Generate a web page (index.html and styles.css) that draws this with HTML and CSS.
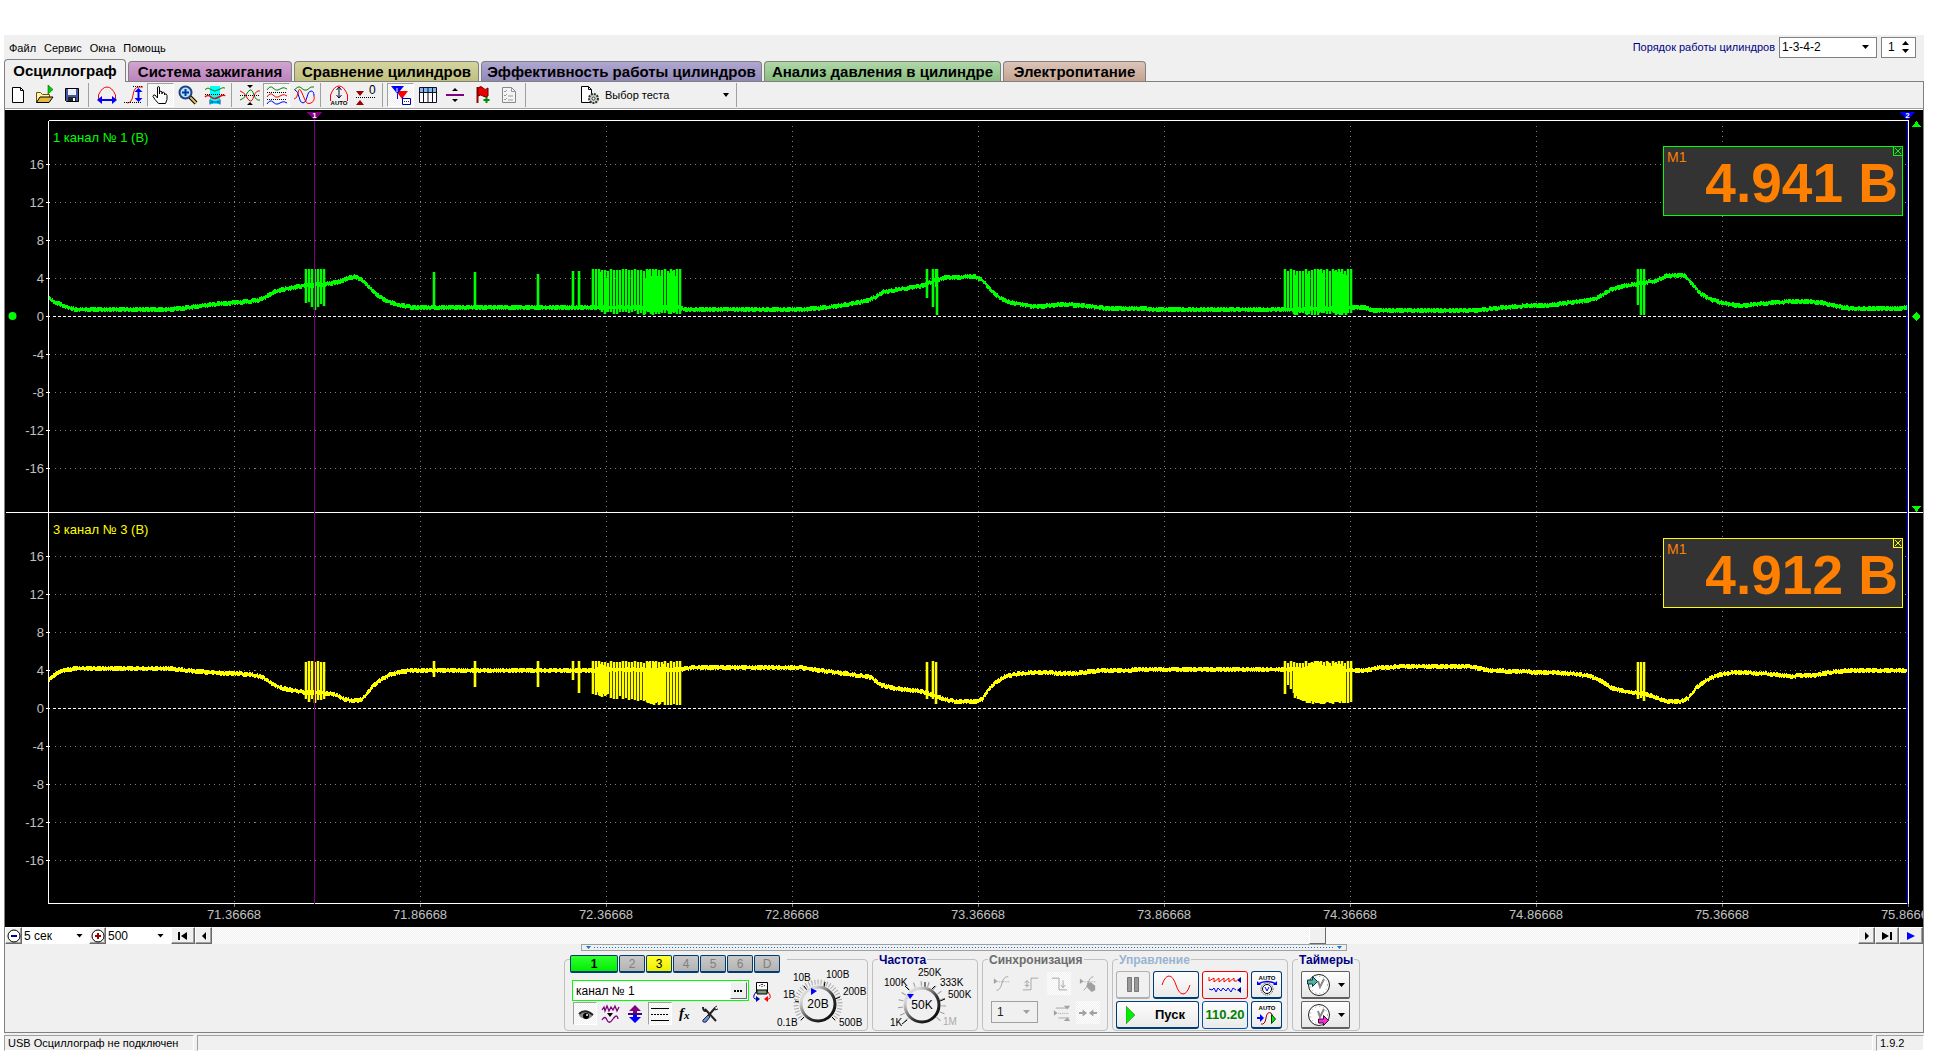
FILE: index.html
```html
<!DOCTYPE html>
<html lang="ru">
<head>
<meta charset="utf-8">
<title>USB Осциллограф</title>
<link rel="stylesheet" href="styles.css">
</head>
<body>
<header class="menubar">
  <nav class="menu">
    <button>Файл</button><button>Сервис</button><button>Окна</button><button>Помощь</button>
  </nav>
  <div class="order">
    <label for="order">Порядок работы цилиндров</label>
    <span class="select order-select"><select id="order"><option>1-3-4-2</option></select></span>
    <span class="spinner"><input id="cyl" type="text" value="1" aria-label="Цилиндр">
      <svg width="7" height="14" viewBox="0 0 7 14"><path d="M0 5 3.5 1 7 5zM0 9 3.5 13 7 9z"/></svg></span>
  </div>
</header>

<div class="tabs" role="tablist">
  <button class="tab tab-active" role="tab" aria-selected="true">Осциллограф</button>
  <button class="tab tab-pink" role="tab">Система зажигания</button>
  <button class="tab tab-olive" role="tab">Сравнение цилиндров</button>
  <button class="tab tab-violet" role="tab">Эффективность работы цилиндров</button>
  <button class="tab tab-green" role="tab">Анализ давления в цилиндре</button>
  <button class="tab tab-tan" role="tab">Электропитание</button>
</div>

<main class="workspace">
  <div class="toolbar" role="toolbar">
    <div class="tools">
      <button class="tool" aria-label="Новый"><svg viewBox="0 0 20 20"><path d="M4.500 2.500h8l3 3v12h-11z" fill="#fff" stroke="#000"/><path d="M12.500 2.500v3h3" fill="none" stroke="#000"/></svg></button>
      <button class="tool" aria-label="Открыть"><svg viewBox="0 0 20 20"><path d="M1.500 17.500v-10h4l2 2h7v3" fill="#fff3b0" stroke="#6b5200"/><path d="M1.500 17.500 5 12h13l-4 5.500z" fill="#e8b83a" stroke="#000"/><path d="M13 0v9l5-4.500z" fill="#0c0" stroke="#060" stroke-width=".6"/></svg></button>
      <button class="tool" aria-label="Сохранить"><svg viewBox="0 0 20 20"><path d="M3.500 3.500h13v13h-12l-1-1z" fill="#3d5a9c" stroke="#000"/><path d="M6 4h8v6H6z" fill="#eef"/><path d="M6 12h8v4H6z" fill="#222"/><path d="M11 13h2v3h-2z" fill="#fff"/></svg></button>
    </div>
    <div class="tools">
      <button class="tool" aria-label="По ширине"><svg viewBox="0 0 20 20"><path d="M1.500 14V10Q5 2 10 2t8.500 8v4" fill="none" stroke="#f00"/><path d="M0 15l5-4v3h10v-3l5 4-5 4v-3H5v3z" fill="#00f"/></svg></button>
      <button class="tool" aria-label="По высоте"><svg viewBox="0 0 20 20"><path d="M3 18q5 0 6-8t6-8h4" fill="none" stroke="#f00"/><path d="M0 17.500h18M9 1.500h10" stroke="#000" stroke-dasharray="1 1"/><path d="M14.500 3l4 4h-3v6h3l-4 4-4-4h3V7h-3z" fill="#00f"/></svg></button>
      <button class="tool sunken" aria-label="Рука"><svg viewBox="0 0 20 20"><path d="M6.500 11V3q0-1.500 1-1.500T8.500 3v6-2.500q1.800-1 2.500.5v2-1.500q2-1 2.500.5v2-1q2.500-.5 2.500 1.500v4l-1.500 4h-7L4 14.500 2 11.500q0-2 2-1.500l2.500 3z" fill="#fff" stroke="#000"/></svg></button>
      <button class="tool" aria-label="Масштаб"><svg viewBox="0 0 20 20"><path d="M12 12l6 6" stroke="#000" stroke-width="4"/><path d="M12 12l6 6" stroke="#e8c050" stroke-width="2"/><circle cx="7.500" cy="7.500" r="6" fill="#b8e0ff" stroke="#204080" stroke-width="2"/><path d="M7.500 4v7M4 7.500h7" stroke="#003c9c" stroke-width="2"/></svg></button>
      <button class="tool" aria-label="Фрагмент"><svg viewBox="0 0 20 20"><path d="M5 1h10v18H5z" fill="#0ff"/><path d="M0 4.500q3-3 6 0t8 0 6-1" fill="none" stroke="#080"/><path d="M0 9.500h20" stroke="#000" stroke-dasharray="1 1"/><path d="M0 12q3-3 6 0t8 0 6-1" fill="none" stroke="#f00" stroke-width="1.500"/><path d="M5 14.500v5m10-5v5m-9-2.500h8m-7-1.500v3m6-3v3" stroke="#003c9c"/></svg></button>
    </div>
    <div class="tools">
      <button class="tool" aria-label="Сжать"><svg viewBox="0 0 20 20"><path d="M0 15q4-1 6-5t4-5 4 5 6 5" fill="none" stroke="#080"/><path d="M0 6q4 1 6 5t4 5 4-5 6-5" fill="none" stroke="#f00"/><path d="M0 10.500h20" stroke="#000" stroke-dasharray="1 1"/><path d="M7 0h6l-3 3zM7 20h6l-3-3z"/></svg></button>
      <button class="tool sunken" aria-label="Раздельно"><svg viewBox="0 0 20 20"><g fill="none"><path d="M0 5q3-5 6-2t5 2 4-2 5 1" stroke="#080"/><path d="M0 12q3-5 6-2t5 2 4-2 5 1" stroke="#f00"/><path d="M0 19q3-5 6-2t5 2 4-2 5 1" stroke="#00f"/><path d="M0 7.500h20M0 14.500h20" stroke="#000" stroke-dasharray="1 1"/></g></svg></button>
      <button class="tool" aria-label="Совместно"><svg viewBox="0 0 20 20"><g fill="none"><path d="M0 5l4-3h2l4 3h3l4-3h3" stroke="#080"/><path d="M1 5q3 1 4 7t4 6 4-6 4-6 3 5" stroke="#00f"/><path d="M0 14q3 0 4-6t3-2 4 9 6 3 3-7" stroke="#f00"/></g></svg></button>
    </div>
    <div class="tools">
      <button class="tool" aria-label="Авто"><svg viewBox="0 0 20 20"><path d="M1.500 16v-6Q5 1 10 1t8.500 9v6" fill="none" stroke="#f00"/><path d="M10 2v11M7.500 5 10 2l2.500 3M7.500 10l2.500 3 2.500-3" fill="none" stroke="#003"/><text x="10" y="20" font-size="6" font-weight="700" text-anchor="middle">AUTO</text></svg></button>
      <button class="tool" aria-label="Ноль"><svg viewBox="0 0 20 20"><path d="M0 6h8l-4 5zM0 20h8l-4-5z" fill="#900"/><path d="M0 12.500h20" stroke="#000" stroke-dasharray="1 1"/><text x="13" y="9" font-size="12">0</text></svg></button>
    </div>
    <div class="tools">
      <button class="tool sunken" aria-label="Метки"><svg viewBox="0 0 20 20"><path d="M5 6h12l-6 8z" fill="#f00"/><path d="M0 1h13L6.500 9z" fill="#00f"/><path d="M6.500 9v5M11.500 12v7" stroke="#00f"/><path d="M6 3v4" stroke="#fff"/><path d="M11.500 13.500h8v6h-8z" fill="#fff" stroke="#00a"/><path d="M13 16.500h5" stroke="#333" stroke-dasharray="1 1"/></svg></button>
      <button class="tool" aria-label="Таблица"><svg viewBox="0 0 20 20"><path d="M1.500 2.500h17v15h-17z" fill="#fff" stroke="#112"/><path d="M2 3h16v4H2z" fill="#80b8f0"/><path d="M1 7.500h18M5.500 3v14M10 3v14M14.500 3v14" stroke="#112"/></svg></button>
      <button class="tool" aria-label="Разделить"><svg viewBox="0 0 20 20"><path d="M1 9h18v2H1z" fill="#800080"/><path d="M10 3l3 3H7zM10 17l3-3H7z"/></svg></button>
      <button class="tool" aria-label="Флаг"><svg viewBox="0 0 20 20"><path d="M5.500 2v16" stroke="#900" stroke-width="2"/><path d="M6 3q3-3 5 0t5 0v8q-3 2-5 0t-5 0z" fill="#e00" stroke="#600"/><path d="M14.500 12v6m-3-3h6" stroke="#080" stroke-width="2"/></svg></button>
      <button class="tool" aria-label="Отчёт"><svg viewBox="0 0 20 20"><path d="M3.500 2.500h9l4 4v11h-13z" fill="#f4f4f4" stroke="#888"/><path d="M12.500 2.500v4h4M5 6l1 1 2-2M5 10l1 1 2-2M5 14l1 1 2-2M9 11h5M9 15h5" fill="none" stroke="#999"/></svg></button>
    </div>
    <div class="tools test">
      <button class="test-button"><svg width="20" height="20" viewBox="0 0 20 20"><path d="M1.500 1.500h7l3 3v13h-10z" fill="#fff" stroke="#000"/><path d="M8.500 1.500v3h3" fill="none" stroke="#000"/><circle cx="13.500" cy="13.500" r="4.500" fill="#c8d4c8" stroke="#333" stroke-width="2" stroke-dasharray="2 1"/><circle cx="13.500" cy="13.500" r="1.500" fill="#fff" stroke="#333"/></svg><span>Выбор теста</span><svg width="6" height="4" viewBox="0 0 6 4"><path d="M0 0h6L3 4z"/></svg></button>
    </div>
  </div>

  <div class="scope">
    <svg class="plot" id="plot" role="img" aria-label="Осциллограммы каналов 1 и 3"></svg>
    <div class="readouts">
      <div class="readout readout-green"><span>M1</span><strong>4.941 В</strong><button aria-label="Закрыть"><svg width="8" height="8" viewBox="0 0 8 8"><path d="M1 1l6 6M7 1L1 7"/></svg></button></div>
      <div class="readout readout-yellow"><span>M1</span><strong>4.912 В</strong><button aria-label="Закрыть"><svg width="8" height="8" viewBox="0 0 8 8"><path d="M1 1l6 6M7 1L1 7"/></svg></button></div>
    </div>
  </div>

  <div class="scrollrow">
    <button class="nav" aria-label="Сжать время"><svg viewBox="0 0 14 14"><circle cx="7" cy="7" r="6" fill="#fff" stroke="#000"/><path d="M4 7h6" stroke="#009" stroke-width="2"/></svg></button>
    <span class="select time-select"><select aria-label="Время"><option>5 сек</option></select></span>
    <button class="nav" aria-label="Растянуть время"><svg viewBox="0 0 14 14"><circle cx="7" cy="7" r="6" fill="#fff" stroke="#000"/><path d="M4 7h6M7 4v6" stroke="#900" stroke-width="2"/></svg></button>
    <span class="select speed-select"><select aria-label="Скорость"><option>500</option></select></span>
    <button class="nav nav-wide" aria-label="В начало"><svg viewBox="0 0 14 14"><path d="M2 3h2v8H2zM11 3v8L5 7z"/></svg></button>
    <button class="nav" aria-label="Назад"><svg viewBox="0 0 14 14"><path d="M9 3v8L5 7z"/></svg></button>
    <div class="track"><span class="thumb"></span></div>
    <button class="nav" aria-label="Вперёд"><svg viewBox="0 0 14 14"><path d="M5 3v8l4-4z"/></svg></button>
    <button class="nav nav-wide" aria-label="В конец"><svg viewBox="0 0 14 14"><path d="M10 3h2v8h-2zM2 3v8l7-4z"/></svg></button>
    <button class="nav nav-wide" aria-label="Воспроизвести"><svg viewBox="0 0 14 14"><path d="M3 3v8l8-4z" fill="#00f"/></svg></button>
  </div>

  <div class="splitter"><i></i><i></i></div>

  <div class="controls">
    <div class="group channel" role="group" aria-label="Канал">
      <div class="channel-side">
        <div class="channels">
          <button class="ch ch-1">1</button><button class="ch">2</button><button class="ch ch-3">3</button><button class="ch">4</button><button class="ch">5</button><button class="ch">6</button><button class="ch">D</button>
        </div>
        <div class="name-row">
          <span class="name-box"><input type="text" value="канал № 1" aria-label="Имя канала"><button aria-label="Выбрать"><svg width="9" height="2" viewBox="0 0 9 2"><path d="M0 0h2v2H0zM3 0h2v2H3zM6 0h2v2H6z"/></svg></button></span>
          <button class="plain" aria-label="Прибор"><svg viewBox="0 0 20 20"><path d="M4.500 1.500h11v10h-11z" fill="#fff" stroke="#000"/><path d="M5 9h10v4H5z" fill="#7a9a7a" stroke="#000"/><path d="M7 5l3-2 3 2M10 3v4" stroke="#000" stroke-dasharray="1 1" fill="none"/><path d="M5 18H3q-2-1-1-4l2-3" fill="none" stroke="#00a"/><path d="M4 15l4 3-4 3z" fill="#00a"/><path d="M15 18h2q2-1 1-4l-2-3" fill="none" stroke="#f00"/><path d="M16 15l-4 3 4 3z" fill="#f00"/></svg></button>
        </div>
        <div class="icon-row">
          <button class="tool sunken" aria-label="Видимость"><svg viewBox="0 0 20 20"><path d="M4 11q6-7 14 0-3 5-8 4t-6-4z" fill="#888"/><path d="M4 10q6-6 14 1" fill="none" stroke="#222" stroke-width="2"/><circle cx="11" cy="12" r="3"/><circle cx="12" cy="11" r="1" fill="#fff"/></svg></button>
          <button class="tool" aria-label="Фильтр"><svg viewBox="0 0 20 20"><g fill="none" stroke="#800080" stroke-width="1.300"><path d="M2 6l2-3 1 4 2-5 2 5 2-4 2 3 2-4 2 5 2-4"/><path d="M2 16q3-5 5 0t6-1 5 0"/></g><path d="M7 9h6l-3 4z"/></svg></button>
          <button class="tool" aria-label="Инверсия"><svg viewBox="0 0 20 20"><path d="M10 1l6 6h-4v3H8V7H4z" fill="#800080"/><path d="M10 19l6-6h-4v-3H8v3H4z" fill="#00f"/><path d="M3 10h14" stroke="#408" stroke-width="2"/></svg></button>
          <button class="tool sunken" aria-label="Сетка"><svg viewBox="0 0 20 20"><path d="M1 4.500h18M1 16.500h18" stroke="#000"/><path d="M1 10.500h18" stroke="#000" stroke-dasharray="2 1"/></svg></button>
          <button class="tool" aria-label="Функция"><svg viewBox="0 0 20 20"><text x="4" y="14" font-family="Liberation Serif,serif" font-size="15" font-weight="700" font-style="italic">f</text><text x="9" y="15" font-family="Liberation Serif,serif" font-size="11" font-weight="700" font-style="italic">x</text></svg></button>
          <button class="tool" aria-label="Настройка"><svg viewBox="0 0 20 20"><path d="M5 5l11 12" stroke="#222" stroke-width="2"/><path d="M3 3q0 4 3 4M15 4L8 12" fill="none" stroke="#222" stroke-width="2"/><path d="M17 2q-4 1-2 4l3-1" fill="none" stroke="#222"/><path d="M8 11l2 2-4 5q-4 1-3-2z" fill="#6a90d0" stroke="#224"/></svg></button>
        </div>
      </div>
      <svg class="dial dial-volts" width="93" height="66" viewBox="0 0 93 66" role="img" aria-label="Предел 20В">
        <path d="M27.400 54.600A22 22 0 1 1 58.600 54.600" fill="none" stroke="#aaa" stroke-width="5" stroke-dasharray="1 2"/>
        <path d="M26 55l3-3M20 36l4 1M29 21l3 4M50 17l-1 5M65 32l-5 2M60 55l-3-3" stroke="#000"/>
        <circle cx="43" cy="39" r="17" fill="#f0f0f0" stroke="url(#ring)" stroke-width="3"/>
        <path d="M36 23l6 3-6 4z" fill="#00f"/>
        <g font-size="10"><text x="18" y="16">10В</text><text x="51" y="13">100В</text><text x="8" y="33">1В</text><text x="68" y="30">200В</text><text x="2" y="61">0.1В</text><text x="64" y="61">500В</text></g>
        <text x="43" y="43" font-size="12" text-anchor="middle">20В</text>
        <defs><linearGradient id="ring" x1="0" y1="0" x2="1" y2="1"><stop offset=".2" stop-color="#d8d8d8"/><stop offset=".6" stop-color="#333"/><stop offset="1" stop-color="#000"/></linearGradient></defs>
      </svg>
    </div>

    <div class="group rate" role="group">
      <h2>Частота</h2>
      <svg class="dial" width="103" height="66" viewBox="0 0 103 66" role="img" aria-label="Частота 50K">
        <path d="M33.700 53.300A21.500 21.500 0 1 1 64.300 53.300" fill="none" stroke="#999" stroke-width="5" stroke-dasharray="1 6"/>
        <path d="M34 53l-5 4M36 23l-4-4M52 15v5M62 19l-4 4M72 32l-5 2" stroke="#000"/>
        <circle cx="49" cy="38" r="17" fill="#f0f0f0" stroke="url(#ring)" stroke-width="3"/>
        <path d="M34 27h7l-4 5z" fill="#00f"/>
        <g font-size="10"><text x="45" y="9">250K</text><text x="11" y="19">100K</text><text x="67" y="19">333K</text><text x="75" y="31">500K</text><text x="17" y="59">1K</text><text x="70" y="58" fill="#aaa">1M</text></g>
        <text x="49" y="42" font-size="12" text-anchor="middle">50K</text>
      </svg>
    </div>

    <div class="group sync" role="group">
      <h2 class="muted">Синхронизация</h2>
      <div class="sync-row">
        <button class="tool" disabled aria-label="Уровень"><svg viewBox="0 0 20 20"><path d="M4 17q4 0 6-8t7-7" fill="none"/><path d="M1 4v6l4-3z" class="f"/><path d="M5 7.500h13" stroke-dasharray="1 1"/></svg></button>
        <button class="tool" disabled aria-label="Фронт"><svg viewBox="0 0 20 20"><path d="M1 16.500h9v-13h8M5.500 14V7M3 9l2.500-3L8 9M3 11.500h5" fill="none"/></svg></button>
        <button class="tool dither" disabled aria-label="Спад"><svg viewBox="0 0 20 20"><path d="M2 3.500h8v13h9M14.500 6v8M12 11l2.500 3 2.500-3" fill="none"/></svg></button>
        <button class="tool" disabled aria-label="Ручная"><svg viewBox="0 0 20 20"><path d="M5 17q3-1 5-8t6-7" fill="none"/><path d="M1 4v6l4-3zM9 9l4-1 5 4v5l-4 2-5-5z" class="f"/><path d="M5 7.500h13" stroke-dasharray="1 1"/></svg></button>
      </div>
      <div class="sync-row sync-low">
        <span class="select sync-select"><select disabled aria-label="Канал синхронизации"><option>1</option></select></span>
        <button class="tool" disabled aria-label="Порог"><svg viewBox="0 0 20 20"><path d="M3 4.500h12M6 15.500h12" fill="none"/><path d="M12 2h7l-3 4zM12 19h7l-3-4zM1 7v6l4-3z" class="f"/><path d="M6 10.500h12" stroke-dasharray="1 1"/></svg></button>
        <button class="tool dither" disabled aria-label="Центр"><svg viewBox="0 0 20 20"><path d="M0 9h4V6l5 4-5 4v-3H0zM20 9h-4V6l-5 4 5 4v-3h4z" class="f"/></svg></button>
      </div>
    </div>

    <div class="group manage" role="group">
      <h2 class="pale">Управление</h2>
      <div class="manage-grid">
        <button class="big big-off" disabled aria-label="Пауза"><svg width="12" height="16" viewBox="0 0 12 16"><path d="M.5.500h4v14h-4zM7.500.500h4v14h-4z" fill="#999" stroke="#777"/></svg></button>
        <button class="big" aria-label="Одиночный"><svg width="30" height="20" viewBox="0 0 30 20"><path d="M1 10Q4 1 8 1t7 9 7 9 7-9" fill="none" stroke="#f00"/></svg></button>
        <button class="big big-red" aria-label="Поток"><svg width="34" height="20" viewBox="0 0 34 20"><path d="M1 2v4l5-3v4l5-4v4l5-4v4l5-4v4l5-4v3h3" fill="none" stroke="#f00"/><path d="M1 14l3 1 2-2 2 4 2-4 3 3 2-3 3 3 2-3 3 4 2-4 3 2" fill="none" stroke="#00f"/><path d="M33 2v6l-4-3zM33 12v6l-4-3z" fill="#008"/></svg></button>
        <button class="big" aria-label="Автопредел"><svg width="20" height="22" viewBox="0 0 20 22"><text x="10" y="6" font-size="6" font-weight="700" text-anchor="middle">AUTO</text><circle cx="10" cy="15" r="6" fill="#fff" stroke="#333" stroke-dasharray="1 1"/><circle cx="10" cy="15" r="4.500" fill="#fff" stroke="#000"/><path d="M8 13l2 4 2-4" fill="none" stroke="#00f"/><path d="M1 10q9-5 18 0" fill="none" stroke="#00f" stroke-width="1.500"/><path d="M0 7v4h4zM20 7v4h-4z" fill="#00f"/></svg></button>
        <button class="big wide"><svg width="9" height="18" viewBox="0 0 9 18"><path d="M0 0v18l9-9z" fill="#0e0" stroke="#555" stroke-width=".5"/></svg><span>Пуск</span></button>
        <button class="big big-blue">110.20</button>
        <button class="big" aria-label="Автосинхронизация"><svg width="20" height="22" viewBox="0 0 20 22"><text x="10" y="6" font-size="6" font-weight="700" text-anchor="middle">AUTO</text><path d="M4 20q4 1 5-6t5-5q2 1 1 6" fill="none" stroke="#900"/><path d="M0 14h5" stroke="#00f" stroke-width="2"/><path d="M3 10v8l4-4z" fill="#00f"/><path d="M14.500 10.500v9l4-4.500z" fill="#0e0" stroke="#040"/></svg></button>
      </div>
    </div>

    <div class="group timers" role="group">
      <h2>Таймеры</h2>
      <button class="timer" aria-label="Таймер пуска"><svg width="26" height="24" viewBox="0 0 26 24"><circle cx="13" cy="12" r="10.500" fill="#fff" stroke="#222"/><circle cx="13" cy="12" r="8.500" fill="none" stroke="#999" stroke-dasharray="1 3"/><path d="M12 8l2 6 4-8" fill="none" stroke="#888" stroke-width="2"/><path d="M1.500 7h5V3.500l5 5-5 5V11h-5z" fill="#4db8a0" stroke="#134"/></svg><svg width="7" height="4" viewBox="0 0 7 4"><path d="M0 0h7L3.500 4z"/></svg></button>
      <button class="timer" aria-label="Таймер остановки"><svg width="26" height="24" viewBox="0 0 26 24"><circle cx="13" cy="12" r="10.500" fill="#fff" stroke="#222"/><circle cx="13" cy="12" r="8.500" fill="none" stroke="#999" stroke-dasharray="1 3"/><path d="M12 8l2 6 4-8" fill="none" stroke="#888" stroke-width="2"/><path d="M12.500 16h5v-3.500l5 5-5 5V20h-5z" fill="#f030c8" stroke="#404"/></svg><svg width="7" height="4" viewBox="0 0 7 4"><path d="M0 0h7L3.500 4z"/></svg></button>
    </div>
  </div>
</main>

<footer class="status">
  <span class="cell cell-state">USB Осциллограф не подключен</span>
  <span class="cell cell-mid"></span>
  <span class="cell cell-version">1.9.2</span>
</footer>
<script src="script.js"></script>
</body>
</html>
```
FILE: styles.css
```css
:root {
  --face: #f0f0f0;
  --line: #808080;
  --soft: #c0c0c0;
  --navy: #000080;
  --frame: #003c74;
}
* { box-sizing: border-box; }
body {
  margin: 0;
  padding: 35px 12px 5px 4px;
  min-height: 100vh;
  display: flex;
  flex-direction: column;
  background: #fff;
  color: #000;
  font: 11px/14px "Liberation Sans", Arial, sans-serif;
}
button, input, select { font: inherit; color: inherit; margin: 0; }
button { padding: 0; border: 0; background: none; }
svg { display: block; flex: none; }

/* menu bar */
.menubar { display: flex; justify-content: space-between; background: var(--face); height: 24px; padding: 1px 8px 0 5px; }
.menu { display: flex; gap: 8px; align-items: center; }
.order { display: flex; align-items: center; gap: 4px; height: 22px; color: var(--navy); }
.select { display: grid; align-items: center; background: #fff; color: #000; }
.select::after {
  content: ""; grid-area: 1 / 1; justify-self: end; margin-right: 7px;
  width: 7px; height: 4px; background: #000; clip-path: polygon(0 0, 100% 0, 50% 100%); pointer-events: none;
}
.select select { grid-area: 1 / 1; width: 100%; appearance: none; border: 0; background: none; padding: 0 0 0 2px; font-size: 12px; opacity: 1; }
.order-select { width: 98px; height: 21px; border: 1px solid var(--line); }
.spinner { display: flex; align-items: center; width: 35px; height: 21px; border: 1px solid var(--line); background: #fff; color: #000; }
.spinner input { width: 20px; border: 0; padding: 0 0 0 6px; background: none; font-size: 12px; }

/* tabs */
.tabs { display: flex; align-items: flex-end; gap: 2px; height: 22px; background: var(--face); padding-right: 8px; }
.tab {
  height: 20px; padding: 0; border: 1px solid var(--line); border-bottom: 0; border-radius: 4px 4px 0 0;
  font: bold 15px/18px "Liberation Sans", Arial, sans-serif; white-space: nowrap;
}
.tab-active { height: 23px; width: 122px; margin-bottom: -1px; background: var(--face); position: relative; z-index: 1; }
.tab-pink { width: 164px; background: linear-gradient(#d0a4d0, #bc84bc); }
.tab-olive { width: 185px; background: linear-gradient(#d4d4a0, #c0c07c); }
.tab-violet { width: 281px; background: linear-gradient(#b0a8d0, #9088b8); }
.tab-green { width: 237px; background: linear-gradient(#b0d8a8, #88bc80); }
.tab-tan { width: 143px; background: linear-gradient(#dcc4b8, #c4a490); }

/* workspace */
.workspace { flex: 1; display: flex; flex-direction: column; border: 1px solid var(--line); background: var(--face); }
.toolbar { display: flex; height: 28px; border-bottom: 1px solid #fff; box-shadow: inset 0 -1px #a0a0a0; padding: 0 0 1px; }
.tools { display: flex; align-items: center; position: relative; padding-right: 8px; }
.tools:first-child { margin-left: -1px; }
.tools::after { content: ""; width: 1px; height: 24px; background: #a0a0a0; position: absolute; right: 4px; }
.tool { width: 27px; height: 24px; display: grid; place-items: center; border: 1px solid transparent; }
.tool svg { width: 20px; height: 20px; overflow: visible; }
.sunken, .dither { background: repeating-conic-gradient(#fff 0 25%, #f0f0f0 0 50%) 0 0 / 2px 2px; }
.sunken { border-color: #a0a0a0 #fff #fff #a0a0a0; }
.test { margin-left: 50px; }
.test-button { display: flex; align-items: center; gap: 5px; width: 153px; height: 24px; }
.test-button svg:last-child { margin-left: auto; margin-right: 4px; }

/* plot */
.scope { flex: 1; position: relative; min-height: 320px; background: #000; overflow: hidden; }
.plot { position: absolute; inset: 0; width: 100%; height: 100%; font-size: 13px; shape-rendering: crispEdges; }
.readouts { position: absolute; top: 10px; right: 20px; bottom: 23px; display: grid; grid-template-rows: 1fr 1fr; }
.readout {
  position: relative; display: flex; justify-content: space-between; width: 240px; height: 70px; margin-top: 26px;
  padding: 0 4px 0 3px; border: 1px solid currentColor; background: #333;
}
.readout span { color: #ff8000; font-size: 14px; line-height: 20px; }
.readout strong { color: #ff8000; font-size: 55px; line-height: 72px; white-space: nowrap; }
.readout button { position: absolute; top: -1px; right: -1px; width: 10px; height: 10px; border: 1px solid currentColor; color: inherit; }
.readout button svg { stroke: currentColor; }
.readout-green { color: #0f0; }
.readout-yellow { color: #ff0; }

/* time scroll row */
.scrollrow { display: flex; height: 17px; }
.nav { width: 17px; display: grid; place-items: center; background: var(--face); border: 1px solid; border-color: #fff #696969 #696969 #fff; box-shadow: inset -1px -1px #a0a0a0; }
.nav svg { width: 14px; height: 14px; }
.nav-wide { width: 24px; }
.time-select { width: 68px; margin-right: -1px; }
.speed-select { width: 65px; }
.track { flex: 1; display: flex; background: repeating-conic-gradient(#fff 0 25%, #f0f0f0 0 50%) 0 0 / 2px 2px; }
.thumb { width: 17px; margin-left: 67%; background: var(--face); border: 1px solid; border-color: #fff #696969 #696969 #fff; }
.track .thumb { margin-left: calc(200% / 3); }
.splitter { display: flex; align-items: center; gap: 3px; align-self: center; width: 766px; max-width: 100%; height: 7px; padding: 0 4px; border: 1px solid #a0a0a0; }
.splitter::before { content: ""; order: 2; flex: 1; height: 1px; background: repeating-linear-gradient(90deg, #0078d7 0 1px, transparent 1px 3px); }
.splitter i { width: 5px; height: 3px; background: #0078d7; clip-path: polygon(0 0, 100% 0, 50% 100%); }
.splitter i:last-child { order: 3; }

/* control groups */
.controls { display: flex; justify-content: center; gap: 4px; padding: 8px 4px 1px 0; }
.group { height: 72px; border: 1px solid var(--soft); border-radius: 4px; flex: none; }
.group h2 { margin: -6px 0 0 5px; padding: 0 1px; width: max-content; background: var(--face); color: var(--navy); font-size: 12px; line-height: 12px; }
.group h2.muted { color: #6d6d6d; }
.group h2.pale { color: #99b4d1; }
.channel { width: 304px; display: flex; padding-left: 5px; }
.channel-side { width: 205px; }
.channels { display: flex; gap: 1px; width: 217px; height: 18px; margin-top: -5px; background: var(--face); }
.ch { width: 26px; border: 1px solid var(--frame); border-bottom-width: 2px; border-radius: 2px; background: linear-gradient(#c8c8c8, #b4b4b4); color: #808080; font-size: 12px; line-height: 14px; }
.ch-1 { width: 48px; background: linear-gradient(#3f3, #0e0); color: #000; font-weight: bold; }
.ch-3 { background: linear-gradient(#ff3, #ee0); color: #000; }
.name-row { display: flex; gap: 3px; margin: 7px 0 0 2px; }
.name-box { display: flex; align-items: center; width: 177px; height: 21px; padding-right: 1px; border: 1px solid #0f0; background: #fff; }
.name-box input { flex: 1; min-width: 0; border: 0; padding: 0 3px; background: none; font-size: 12px; }
.name-box button { display: grid; place-items: center; width: 17px; height: 17px; background: var(--face); border: 1px solid; border-color: #fff #696969 #696969 #fff; }
.plain svg { width: 20px; height: 20px; overflow: visible; }
.icon-row { display: flex; margin: 1px 0 0 3px; }
.icon-row .tool { width: 24px; height: 23px; margin-right: 1px; }
.dial { margin-top: 5px; }
.rate { width: 106px; }
.rate .dial { margin-top: 1px; }
.sync { width: 126px; }
.sync-row { display: flex; justify-content: space-between; padding: 6px 7px 0 7px; }
.sync-row .tool { width: 24px; height: 23px; }
.sync-row svg { stroke: #a0a0a0; width: 18px; height: 18px; }
.sync-row .f { fill: #a0a0a0; stroke: none; }
.sync-low { padding: 6px 7px 0 8px; }
.sync-select { width: 47px; height: 22px; border: 1px solid #a0a0a0; background: var(--face); margin-right: 9px; }
.sync-select::after { background: #a0a0a0; }
.sync-select select { padding-left: 5px; color: #222; }
.manage { width: 176px; }
.manage-grid { display: grid; grid-template-columns: 34px 46px 46px 31px; gap: 2px 3px; padding: 5px 3px 0; }
.big { display: flex; align-items: center; justify-content: center; height: 28px; border: 1px solid var(--frame); border-bottom-width: 2px; border-radius: 3px; background: linear-gradient(#fdfdfd, #eaeaea); }
.big-off { border-color: #b0b0b0; background: var(--face); }
.big-red { border: 1px solid #e00; }
.big-blue { border: 1px solid #0050a8; color: #008000; font-size: 13px; font-weight: bold; }
.wide { grid-column: span 2; justify-content: flex-start; padding-left: 9px; gap: 20px; font-size: 13px; font-weight: bold; }
.timers { width: 68px; }
.timer { display: flex; align-items: center; gap: 6px; width: 49px; height: 28px; margin: 0 0 2px 8px; padding-left: 4px; border: 1px solid #606060; border-bottom-width: 2px; border-radius: 2px; background: linear-gradient(#fdfdfd, #e6e6e6); }
.timers h2 { margin-bottom: 5px; }

/* status bar */
.status { display: flex; gap: 3px; height: 18px; padding-top: 2px; background: var(--face); }
.cell { border: 1px solid #a0a0a0; border-color: #a0a0a0 #fff #fff #a0a0a0; padding-left: 3px; line-height: 14px; white-space: nowrap; }
.cell-state { width: 190px; }
.cell-mid { flex: 1; }
.cell-version { width: 48px; }
```
FILE: script.js
```js
// Trace envelopes: [sample, volts]; 372 samples per second, 1860 on screen.
const RATE = 372, SPAN = 1860, START = 70.86668;
const VOLTS = 392 / 9.5;

const green = [0,1.9,7,1.5,14,1.2,24,.8,42,.7,117,.7,137,.9,167,1.3,192,1.5,210,1.7,218,2.1,226,2.6,237,2.9,252,3.2,277,3.4,289,3.6,299,4,306,4.2,313,3.9,320,3.2,327,2.4,335,1.8,347,1.3,362,1,382,.9,630,.9,638,.7,752,.7,782,1,807,1.4,820,1.7,828,2.1,835,2.6,847,2.8,872,3.2,880,3.5,887,3.8,897,4.1,927,4.2,934,3.8,942,2.8,952,1.9,962,1.5,982,1.1,997,1.1,1014,1.3,1037,1.1,1062,.8,1236,.75,1303,.9,1317,.9,1327,.6,1422,.6,1442,.8,1472,1.1,1502,1.2,1532,1.6,1546,1.8,1554,2.3,1562,2.8,1574,3.2,1588,3.4,1597,3.6,1606,3.7,1612,4,1618,4.3,1636,4.3,1644,3.4,1652,2.4,1662,1.8,1674,1.4,1692,1.1,1717,1.4,1747,1.6,1772,1.5,1787,1.1,1802,.85,1860,.9];
const yellow = [0,3,8,3.7,14,4,27,4.2,122,4.2,147,3.9,177,3.7,202,3.6,214,3.3,222,2.7,232,2.2,244,1.9,257,1.7,282,1.6,290,1.3,297,.95,304,.85,312,.9,318,1.5,324,2.3,332,3,342,3.6,352,3.85,362,4,537,4,557,4.1,632,4.1,642,4.3,752,4.3,772,4,802,3.6,822,3.3,832,2.5,847,2.1,874,1.8,884,1.4,897,.95,907,.75,927,.75,934,1,940,2,947,2.7,957,3.4,972,3.7,992,3.8,1014,3.7,1027,3.7,1052,4,1112,4.1,1232,4.1,1305,4,1317,4,1330,4.3,1352,4.4,1422,4.4,1442,4,1492,3.8,1522,3.7,1542,3.4,1554,2.8,1564,2.1,1577,1.8,1592,1.6,1604,1.3,1614,.85,1620,.7,1632,.75,1640,1.1,1648,2.2,1658,3,1672,3.6,1687,3.8,1712,3.7,1742,3.4,1767,3.5,1787,3.9,1802,4,1860,4];

// Single spikes: [sample, high volts, low volts].
const greenSpikes = [[258,5,1.4],[261,5,1.5],[264,4.9,1],[267,4.9,.6],[270,5,.9],[273,5,1.3],[276,4.9,1.1],[386,4.6,.8],[427,4.6,.8],[490,4.4,.8],[525,4.7,.8],[531,4.7,.8],[879,5,1.9],[885,5,.9],[888,5,3.1],[889,4.9,.1],[1590,4.9,1.2],[1593,5,.1],[1596,5,.1]];
const yellowSpikes = [[258,4.8,1],[261,4.9,.6],[264,4.9,.9],[267,4.8,.5],[270,4.9,.8],[273,4.8,.8],[276,4.8,1],[386,5,3.3],[427,5,2.2],[490,5,2.2],[525,5,3],[531,5,1.6],[879,4.8,1],[885,4.9,1],[888,4.8,.4],[1590,4.8,1],[1593,4.8,1.1],[1596,4.8,.7]];

const noise = (i, k) => { const s = Math.sin(i * 12.9898 + k * 78.233) * 43758.5453; return s - Math.floor(s); };

// Pulse trains, one spike each three samples; "packed" ranges are drawn without gaps.
function burst(from, to, low, packed) {
  const out = [];
  for (let s = from; s <= to; s += 3) {
    const hi = 4.75 + noise(s, 3) * .25;
    out.push([s, hi, low(s)]);
    if (packed.some(([a, b]) => s >= a && s <= b)) out.push([s + 1, hi - noise(s, 5) * .8, low(s + 1)]);
  }
  return out;
}
greenSpikes.push(
  ...burst(545, 632, s => s < 554 ? .8 : .1 + noise(s, 1) * .4, [[549, 552], [555, 558], [594, 612], [620, 626]]),
  ...burst(1237, 1304, s => s < 1246 ? .7 : .05 + noise(s, 1) * .35, [[1245, 1248], [1258, 1260], [1270, 1274], [1285, 1298]]));
yellowSpikes.push(
  ...burst(545, 632, s => Math.max(.3, 1.3 - (s - 545) / 60 + noise(s, 2) * .5), [[547, 557], [594, 614]]),
  ...burst(1237, 1304, s => s < 1247 ? 1.4 + noise(s, 2) * 1.5 : .4 + Math.max(0, 1262 - s) / 25 + noise(s, 2) * .3, [[1246, 1296]]));

function level(points, s) {
  let i = 2;
  while (i < points.length - 2 && points[i] < s) i += 2;
  const [x0, v0, x1, v1] = points.slice(i - 2, i + 2);
  return v0 + (v1 - v0) * Math.min(1, (s - x0) / (x1 - x0));
}

const svg = document.getElementById('plot');
function draw() {
  const W = svg.clientWidth, H = svg.clientHeight;
  const left = 43, top = 10, right = W - 15, bottom = H - 24;
  const half = Math.round((bottom - top) / 2), unit = half / VOLTS;
  const px = s => left + s * (right - left) / SPAN;
  let out = '';
  const line = (x1, y1, x2, y2, c, extra = '') =>
    out += `<path d="M${x1 + .5} ${y1 + .5}L${x2 + .5} ${y2 + .5}" stroke="${c}" ${extra}/>`;
  const text = (x, y, t, c, anchor = 'start', extra = '') =>
    out += `<text x="${x}" y="${y}" fill="${c}" text-anchor="${anchor}" ${extra}>${t}</text>`;

  for (let k = 1; k <= 10; k++) {
    const x = Math.round(px(k * RATE / 2));
    if (k < 10) line(x, top + 5, x, bottom, '#808080', 'stroke-dasharray="1 4"');
    line(x, bottom, x, bottom + 3, '#808080');
    text(x, bottom + 16, (START + k / 2).toFixed(5), '#c0c0c0', 'middle');
  }
  [[green, greenSpikes, '#0f0', '1 канал № 1 (В)'], [yellow, yellowSpikes, '#ff0', '3 канал № 3 (В)']].forEach(([pts, spikes, color, name], n) => {
    const base = top + n * half, zero = Math.round(base + half / 2);
    for (let v = -16; v <= 16; v += 4) {
      const y = Math.round(zero - v * unit);
      if (v) line(left + 6, y, right, y, '#808080', 'stroke-dasharray="1 4"');
      else line(left + 4, y, right, y, '#fff', 'stroke-dasharray="3 2"');
      line(left - 3, y, left + 1, y, '#fff');
      text(left - 4, y + 5, v, '#c0c0c0', 'end');
    }
    text(left + 5, base + 22, name, color);
    let d = '';
    for (let x = left; x < right; x++) {
      const y = Math.round(zero - level(pts, (x - left) * SPAN / (right - left)) * unit);
      d += `M${x + .5} ${y - 1 - Math.round(noise(x, n) * 1.400)}V${y + 2 + Math.round(noise(x, n + 7) * 1.300)}`;
    }
    out += `<path d="${d}" stroke="${color}"/>`;
    d = spikes.map(([s, hi, lo]) => `M${Math.round(px(s))} ${Math.round(zero - hi * unit)}V${Math.round(zero - lo * unit)}`).join('');
    out += `<path d="${d}" stroke="${color}" stroke-width="4" opacity=".3"/>`;
    out += `<path d="${d}" stroke="${color}" stroke-width="2"/>`;
  });

  const zero = Math.round(top + half / 2), split = top + half, cursor = Math.round(px(266));
  line(left, top, right, top, '#fff');
  line(0, split, W, split, '#fff');
  line(left, bottom, right, bottom, '#fff');
  line(left, top, left, bottom, '#fff');
  line(right, top, right, bottom, '#fff');
  line(right - 1, top, right - 1, bottom, '#00f');
  line(cursor, top, cursor, bottom, '#800080');
  out += `<path d="M${cursor - 7} 2h15l-7.500 8z" fill="#800080"/><path d="M${right - 8} 2h15l-7.500 8z" fill="#00f"/>`;
  text(cursor + .5, 8, '1', '#fff', 'middle', 'font-size="8" font-weight="700"');
  text(right - .5, 8, '2', '#fff', 'middle', 'font-size="8" font-weight="700"');
  out += `<circle cx="7.500" cy="${zero}" r="4" fill="#0f0" shape-rendering="auto"/>`;
  out += `<path d="M${W - 11} 17h9l-4.500-6zM${W - 11} ${split - 6}h9l-4.500 6zM${W - 6.5} ${zero - 4}l4 4.500-4 4.500-4-4.500z" fill="#0f0"/>`;
  svg.innerHTML = out;
}
draw();
addEventListener('resize', draw);
```
